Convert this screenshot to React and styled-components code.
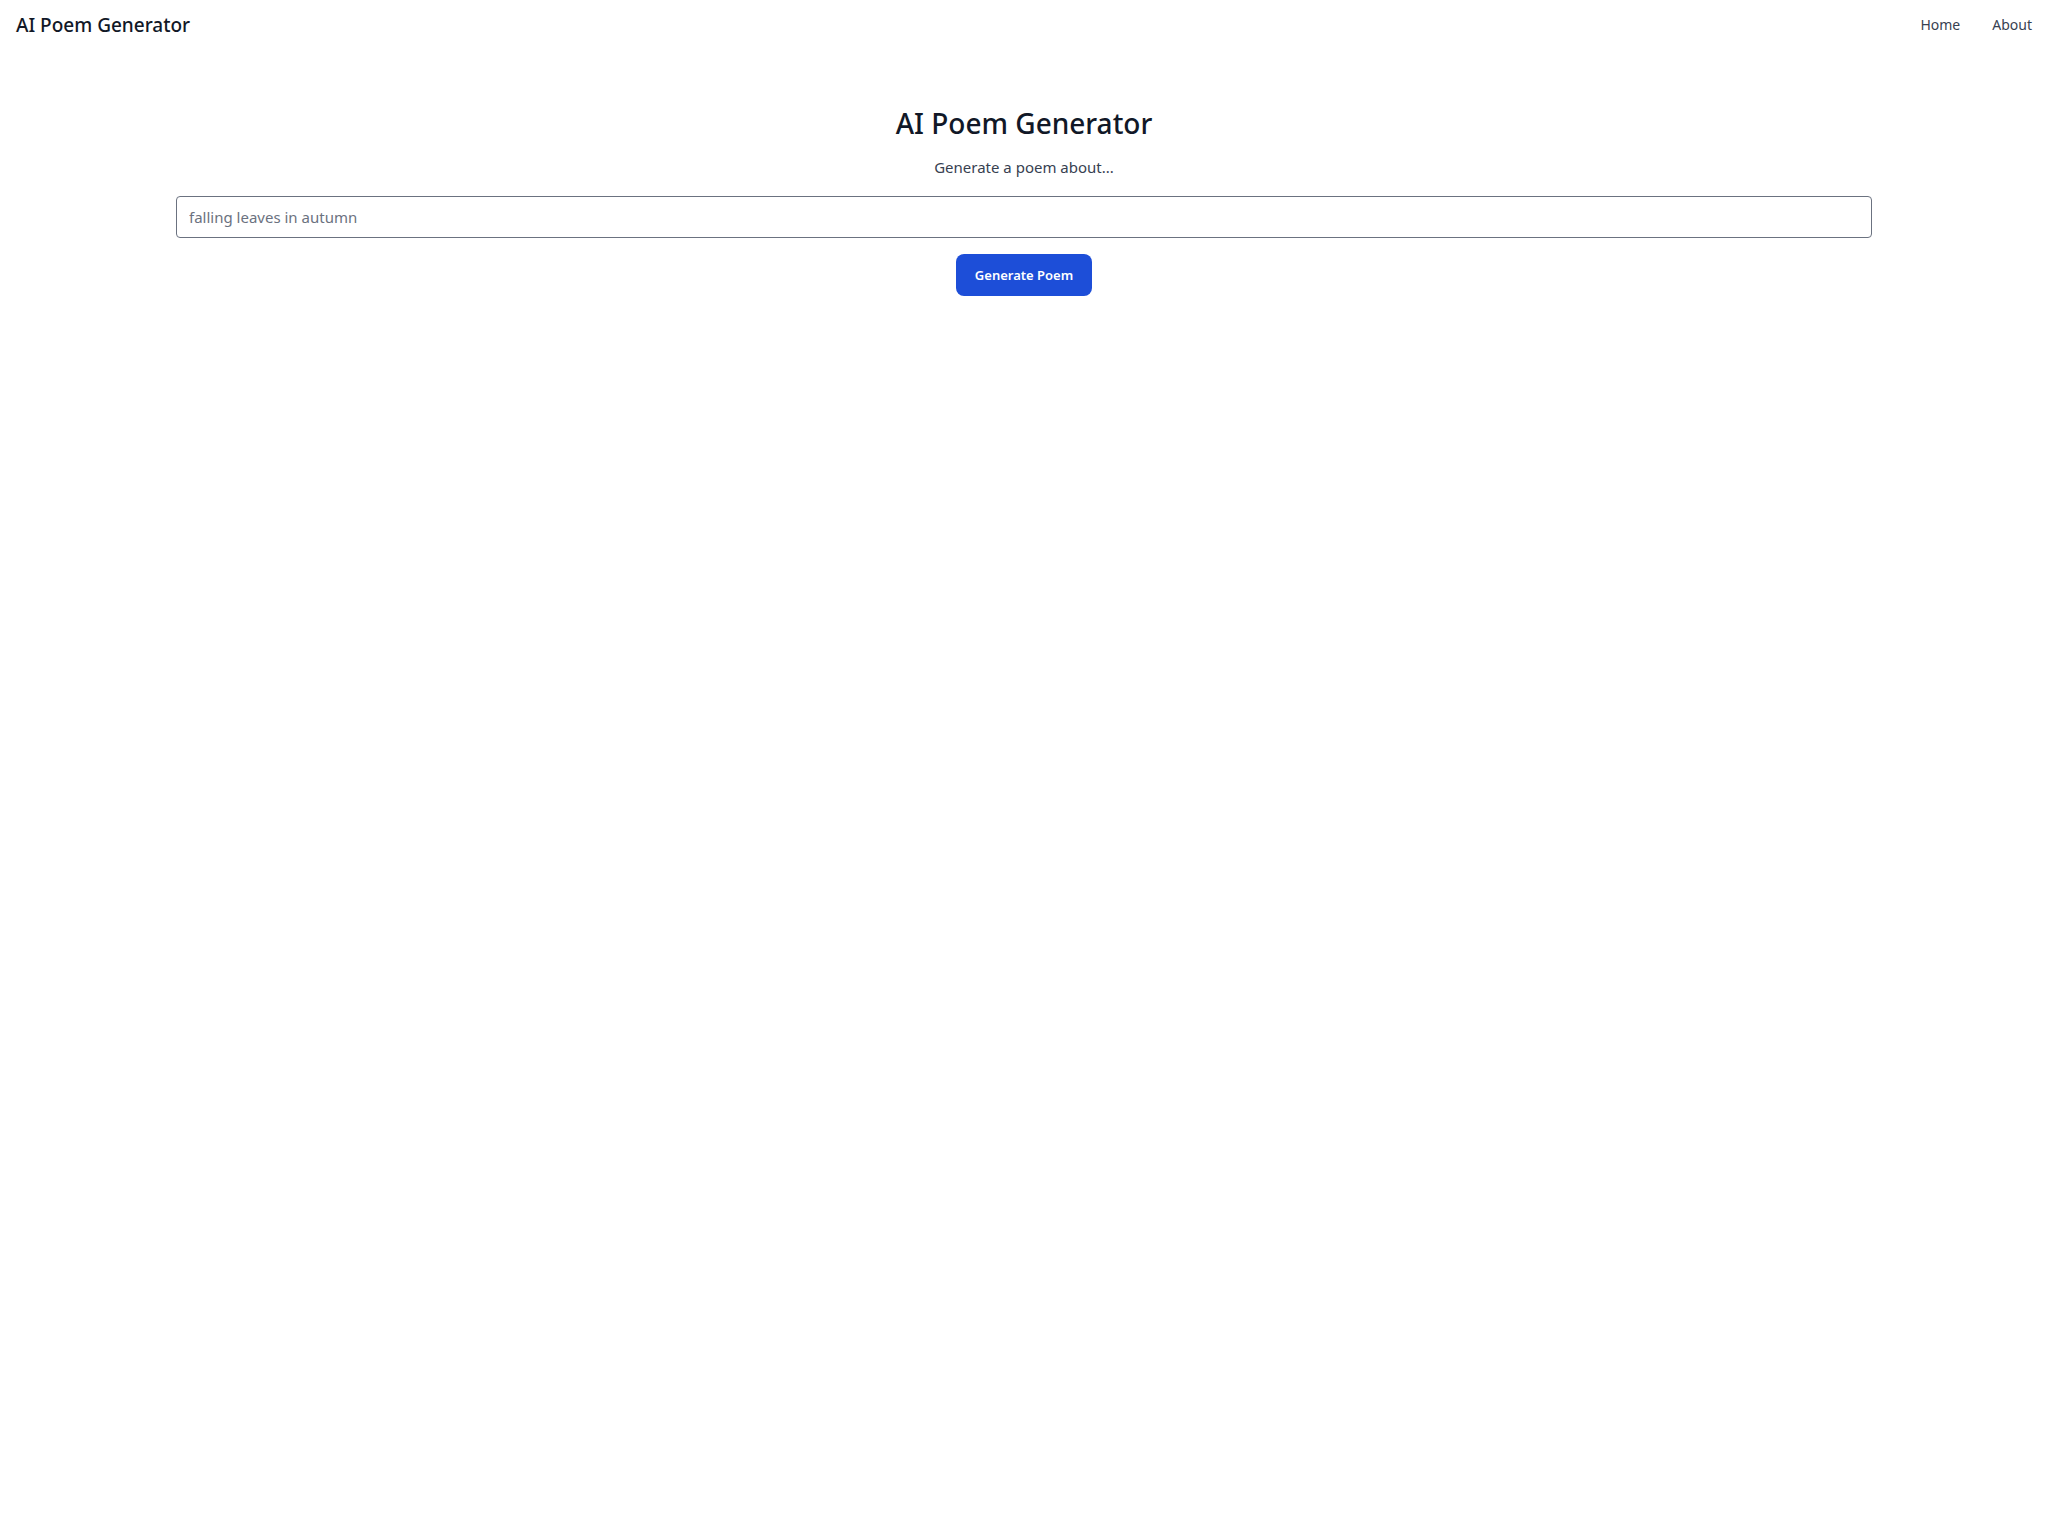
import React from "react";
import styled, { createGlobalStyle } from "styled-components";

const Global = createGlobalStyle`
  * { box-sizing: border-box; }
  body {
    margin: 0;
    background: #ffffff;
    font-family: "Noto Sans", "Open Sans", sans-serif;
    color: #111827;
  }
`;

const Header = styled.header`
  display: flex;
  align-items: center;
  justify-content: space-between;
  padding: 10px 16px;
  height: 50px;
`;

const Brand = styled.div`
  font-size: 19px;
  font-weight: 500;
  color: #111827;
`;

const Nav = styled.nav`
  display: flex;
  gap: 32px;
  margin-top: -2px;
`;

const NavLink = styled.a`
  font-size: 14px;
  color: #374151;
  text-decoration: none;
  cursor: pointer;
`;

const Main = styled.main`
  display: flex;
  flex-direction: column;
  align-items: center;
  padding: 53px 176px 0;
`;

const Title = styled.h1`
  margin: 0;
  font-size: 28px;
  font-weight: 500;
  line-height: 40px;
  color: #111827;
`;

const Subtitle = styled.p`
  margin: 13px 0 0;
  font-size: 15px;
  line-height: 22px;
  color: #374151;
`;

const Input = styled.input`
  margin-top: 18px;
  width: 100%;
  height: 42px;
  padding: 0 12px;
  border: 1px solid #6b7280;
  border-radius: 4px;
  font-family: inherit;
  font-size: 15px;
  color: #111827;
  outline: none;
  &::placeholder { color: #6b7280; }
`;

const Button = styled.button`
  margin-top: 16px;
  height: 42px;
  padding: 0 19px;
  border: none;
  border-radius: 8px;
  background: #1d4ed8;
  color: #ffffff;
  font-family: inherit;
  font-size: 13px;
  font-weight: 600;
  cursor: pointer;
`;

export default function App() {
  return (
    <>
      <Global />
      <Header>
        <Brand>AI Poem Generator</Brand>
        <Nav>
          <NavLink>Home</NavLink>
          <NavLink>About</NavLink>
        </Nav>
      </Header>
      <Main>
        <Title>AI Poem Generator</Title>
        <Subtitle>Generate a poem about...</Subtitle>
        <Input placeholder="falling leaves in autumn" />
        <Button>Generate Poem</Button>
      </Main>
    </>
  );
}
